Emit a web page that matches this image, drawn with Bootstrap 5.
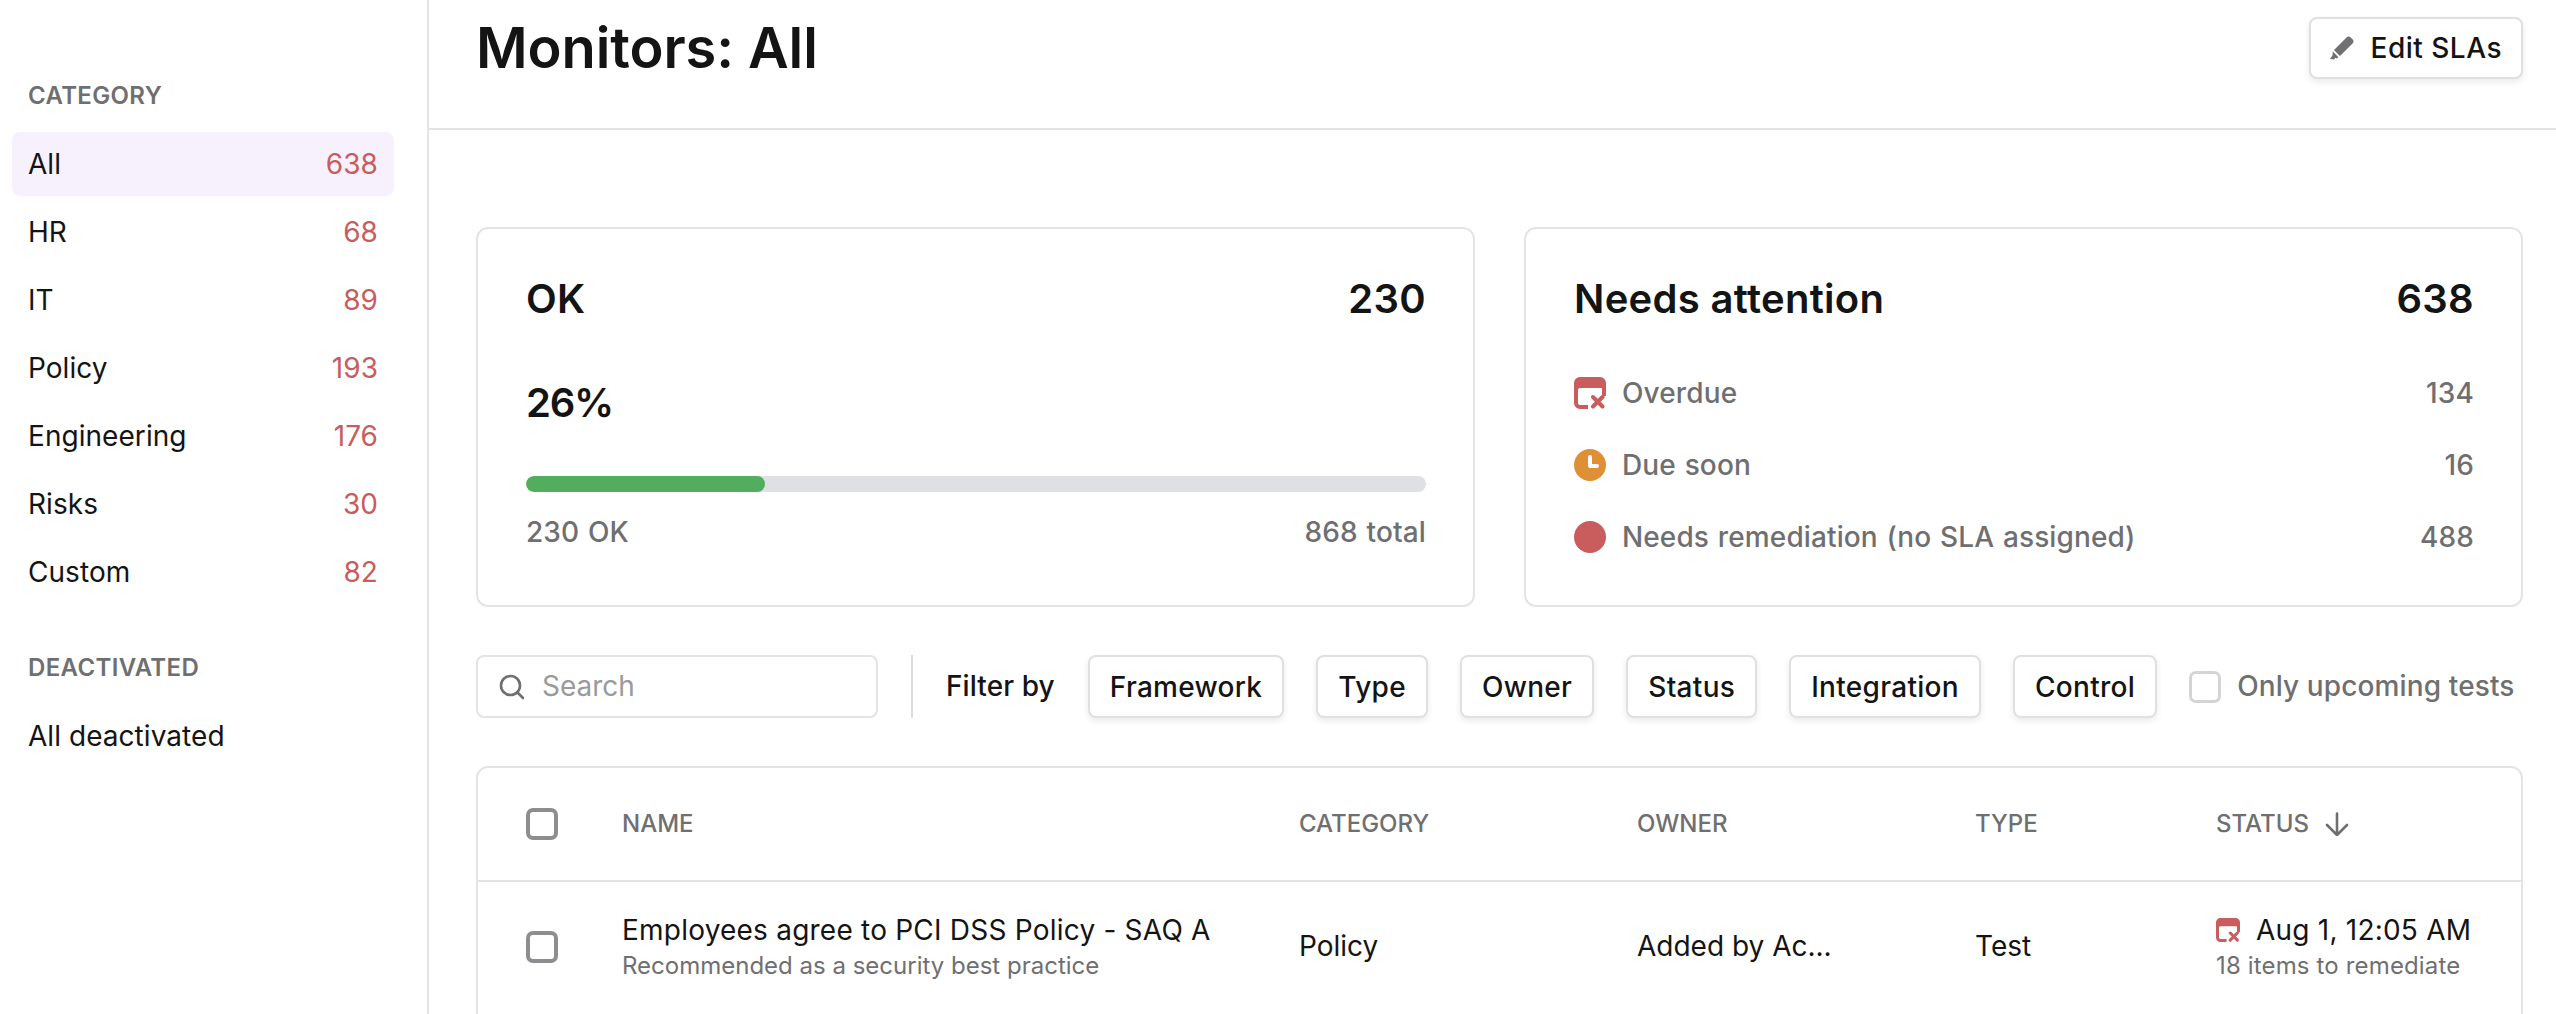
<!DOCTYPE html>
<html lang="en">
<head>
<meta charset="utf-8">
<title>Monitors: All</title>
<link href="https://cdn.jsdelivr.net/npm/bootstrap@5.3.0/dist/css/bootstrap.min.css" rel="stylesheet">
<style>
html,body{height:100%;overflow:hidden}
body{font-family:Inter,"Liberation Sans",sans-serif;font-size:28px;color:#141414;background:#fff;line-height:1.4}
.shell{height:100vh}
.side{width:429px;flex:none;border-right:2px solid #e4e4e6;padding:80px 33px 0 12px}
.side-head{font-size:24px;line-height:32px;font-weight:600;color:#6f6f72;padding-left:16px;margin-bottom:20px;letter-spacing:.35px}
.side-head.second{margin-top:48px}
.side-row{height:64px;padding:0 16px;border-radius:8px;margin-bottom:4px;color:#141414;text-decoration:none;letter-spacing:.05px}
.side-row.on{background:#f6f1fd}
.side-text{padding-top:2px}
.num-red{color:#c95c5c}
.main-col{min-width:0;padding:0 33px 0 0}
.top-bar{padding:17px 0 49px 47px;margin-right:-33px;padding-right:33px;border-bottom:2px solid #e4e4e6}
.page-title{font-size:56px;line-height:62px;font-weight:600;margin:0;color:#141414;letter-spacing:-.1px}
.act-btn{height:62px;border:2px solid #e0e0e2;border-radius:8px;background:#fff;color:#141414;font-size:28px;font-weight:500;line-height:1;letter-spacing:.5px;box-shadow:0 3px 6px rgba(20,20,30,.09);display:inline-flex;align-items:center;padding:0 19px}
.act-btn svg{margin-right:17px}
.body-pad{padding-left:47px}
.stat-row{margin-top:97px;gap:49px}
.stat-card{flex:1 1 0;height:380px;border:2px solid #e4e4e6;border-radius:12px;padding:46px 47px 46px 48px;color:#141414}
.stat-title{font-size:40px;line-height:48px;font-weight:600;letter-spacing:.3px}
.pct{font-size:40px;line-height:48px;font-weight:600;margin-top:56px;letter-spacing:-1.2px}
.bar-track{height:16px;border-radius:8px;background:#dfe0e3;margin-top:49px;overflow:hidden}
.bar-fill{height:100%;background:#52ad5e;border-radius:8px}
.muted-line{color:#6f6f72;font-size:28px;line-height:40px;font-weight:500;letter-spacing:.12px;word-spacing:1.2px}
.bar-foot{margin-top:20px}
.att-list{margin-top:34px}
.att-row{height:72px}
.att-row svg{margin-right:16px;flex:none}
.filter-row{margin-top:48px;height:63px}
.search-box{width:402px;height:63px;border:2px solid #e4e4e6;border-radius:8px;padding:0 20px 0 21px;flex:none}
.search-box input{border:0;outline:0;padding:0;margin-left:17px;width:300px;font-size:28px;color:#141414;background:transparent}
.search-box input::placeholder{color:#9a9a9e;opacity:1}
.v-rule{width:2px;height:63px;background:#dcdcde;margin:0 33px;flex:none}
.filter-lbl{font-weight:500;margin-right:33px;white-space:nowrap;letter-spacing:.1px}
.fil-btn{height:63px;border:2px solid #e0e0e2;border-radius:8px;background:#fff;color:#141414;font-size:28px;font-weight:500;line-height:1;letter-spacing:.3px;box-shadow:0 3px 6px rgba(20,20,30,.09);padding:0 20px;margin-right:32px;white-space:nowrap}
.tick-wrap{color:#6f6f72;white-space:nowrap;font-weight:500;letter-spacing:.12px}
.tick{width:32px;height:32px;border-radius:7px;flex:none;display:inline-block}
.tick.light{border:3px solid #d4d4d7;margin-right:16px}
.tick.dark{border:4px solid #8e8e92;display:block}
.tbl-card{margin-top:48px;border:2px solid #e4e4e6;border-radius:12px 12px 0 0;height:400px;overflow:hidden}
.mon-table{table-layout:fixed;width:100%;border-collapse:collapse;margin:0}
.mon-table th,.mon-table td{padding:0;border:0;vertical-align:middle;background:transparent;color:#141414;box-shadow:none}
.mon-table thead th{height:113px;border-bottom:2px solid #e4e4e6;font-size:24px;font-weight:500;color:#6f6f72}
.mon-table tbody td{height:130px}
.tick-cell{padding-left:48px!important}
.name-main{line-height:38px;letter-spacing:.22px}
.name-sub{font-size:24px;line-height:34px;color:#6f6f72}
.when-sub{letter-spacing:.15px}
.stat-when svg{margin-right:16px}
</style>
</head>
<body>
<div class="shell d-flex">
  <aside class="side">
    <div class="side-head">CATEGORY</div>
    <a class="side-row on d-flex align-items-center justify-content-between" href="#"><span class="side-text">All</span><span class="side-text num-red">638</span></a>
    <a class="side-row d-flex align-items-center justify-content-between" href="#"><span class="side-text">HR</span><span class="side-text num-red">68</span></a>
    <a class="side-row d-flex align-items-center justify-content-between" href="#"><span class="side-text">IT</span><span class="side-text num-red">89</span></a>
    <a class="side-row d-flex align-items-center justify-content-between" href="#"><span class="side-text">Policy</span><span class="side-text num-red">193</span></a>
    <a class="side-row d-flex align-items-center justify-content-between" href="#"><span class="side-text">Engineering</span><span class="side-text num-red">176</span></a>
    <a class="side-row d-flex align-items-center justify-content-between" href="#"><span class="side-text">Risks</span><span class="side-text num-red">30</span></a>
    <a class="side-row d-flex align-items-center justify-content-between" href="#"><span class="side-text">Custom</span><span class="side-text num-red">82</span></a>
    <div class="side-head second">DEACTIVATED</div>
    <a class="side-row d-flex align-items-center" href="#"><span class="side-text">All deactivated</span></a>
  </aside>
  <main class="main-col flex-grow-1">
    <header class="top-bar d-flex align-items-center justify-content-between">
      <h1 class="page-title">Monitors: All</h1>
      <button class="act-btn" type="button">
        <svg width="24" height="24" viewBox="0 0 24 24"><path fill="#707073" d="M16.500 1.500a3 3 0 0 1 4.200 0l1.800 1.800a3 3 0 0 1 0 4.200L10 20l-6-6zM2.800 15.500l5.700 5.800-2 1.200-1.200-.7-1.300 1.700-4-.5 2.500-3.500z"/></svg>
        Edit SLAs
      </button>
    </header>
    <div class="body-pad">
      <section class="stat-row d-flex">
        <div class="stat-card card">
          <div class="stat-title d-flex justify-content-between"><span>OK</span><span>230</span></div>
          <div class="pct">26%</div>
          <div class="bar-track"><div class="bar-fill" style="width:26.5%"></div></div>
          <div class="muted-line bar-foot d-flex justify-content-between"><span>230 OK</span><span>868 total</span></div>
        </div>
        <div class="stat-card card">
          <div class="stat-title d-flex justify-content-between"><span>Needs attention</span><span>638</span></div>
          <div class="att-list">
            <div class="att-row muted-line d-flex align-items-center">
              <svg width="32" height="32" viewBox="0 0 32 32"><path fill="#c95c5c" d="M6 0h20a6 6 0 0 1 6 6v13h-4v-7c0-.6-.4-1-1-1H6c-1.100 0-2 .9-2 2v13c0 1.100.9 2 2 2h8v4H6a6 6 0 0 1-6-6V6a6 6 0 0 1 6-6z"/><path stroke="#c95c5c" stroke-width="4" stroke-linecap="round" fill="none" d="M19 20l9.500 9.500M28.500 20l-9.500 9.500"/></svg>
              <span class="flex-grow-1">Overdue</span><span>134</span>
            </div>
            <div class="att-row muted-line d-flex align-items-center">
              <svg width="32" height="32" viewBox="0 0 32 32"><circle cx="16" cy="16" r="16" fill="#df9035"/><path fill="none" stroke="#fff" stroke-width="4" stroke-linecap="round" stroke-linejoin="round" d="M16 8v9h7"/></svg>
              <span class="flex-grow-1">Due soon</span><span>16</span>
            </div>
            <div class="att-row muted-line d-flex align-items-center">
              <svg width="32" height="32" viewBox="0 0 32 32"><circle cx="16" cy="16" r="16" fill="#c95c5c"/></svg>
              <span class="flex-grow-1">Needs remediation (no SLA assigned)</span><span>488</span>
            </div>
          </div>
        </div>
      </section>
      <section class="filter-row d-flex align-items-center">
        <label class="search-box d-flex align-items-center">
          <svg width="26" height="26" viewBox="0 0 26 26" fill="none" stroke="#6f6f72" stroke-width="2.6" stroke-linecap="round"><circle cx="11.500" cy="11.500" r="9.500"/><path d="M18.500 18.500l5.500 5.500"/></svg>
          <input type="text" placeholder="Search">
        </label>
        <span class="v-rule"></span>
        <span class="filter-lbl">Filter by</span>
        <button class="fil-btn" type="button">Framework</button>
        <button class="fil-btn" type="button">Type</button>
        <button class="fil-btn" type="button">Owner</button>
        <button class="fil-btn" type="button">Status</button>
        <button class="fil-btn" type="button">Integration</button>
        <button class="fil-btn" type="button">Control</button>
        <span class="tick-wrap d-flex align-items-center"><span class="tick light"></span>Only upcoming tests</span>
      </section>
      <section class="tbl-card">
        <table class="mon-table table">
          <colgroup><col style="width:144px"><col style="width:677px"><col style="width:338px"><col style="width:338px"><col style="width:241px"><col></colgroup>
          <thead>
            <tr>
              <th class="tick-cell"><span class="tick dark"></span></th>
              <th>NAME</th><th>CATEGORY</th><th>OWNER</th><th>TYPE</th>
              <th><span class="d-flex align-items-center">STATUS
                <svg class="ms-3" width="24" height="24" viewBox="0 0 24 24" fill="none" stroke="#6f6f72" stroke-width="2.6" stroke-linecap="round" stroke-linejoin="round"><path d="M12 1.500v21M2 13l10 10 10-10"/></svg></span></th>
            </tr>
          </thead>
          <tbody>
            <tr>
              <td class="tick-cell"><span class="tick dark"></span></td>
              <td><div class="name-main">Employees agree to PCI DSS Policy - SAQ A</div><div class="name-sub">Recommended as a security best practice</div></td>
              <td>Policy</td>
              <td>Added by Ac...</td>
              <td>Test</td>
              <td>
                <div class="name-main stat-when d-flex align-items-center text-nowrap">
                  <svg width="24" height="24" viewBox="0 0 32 32"><path fill="#c95c5c" d="M6 0h20a6 6 0 0 1 6 6v13h-4v-7c0-.6-.4-1-1-1H6c-1.100 0-2 .9-2 2v13c0 1.100.9 2 2 2h8v4H6a6 6 0 0 1-6-6V6a6 6 0 0 1 6-6z"/><path stroke="#c95c5c" stroke-width="4" stroke-linecap="round" fill="none" d="M19 20l9.500 9.500M28.500 20l-9.500 9.500"/></svg>
                  Aug 1, 12:05 AM
                </div>
                <div class="name-sub when-sub text-nowrap">18 items to remediate</div>
              </td>
            </tr>
          </tbody>
        </table>
      </section>
    </div>
  </main>
</div>
<script src="https://cdn.jsdelivr.net/npm/bootstrap@5.3.0/dist/js/bootstrap.bundle.min.js"></script>
</body>
</html>
